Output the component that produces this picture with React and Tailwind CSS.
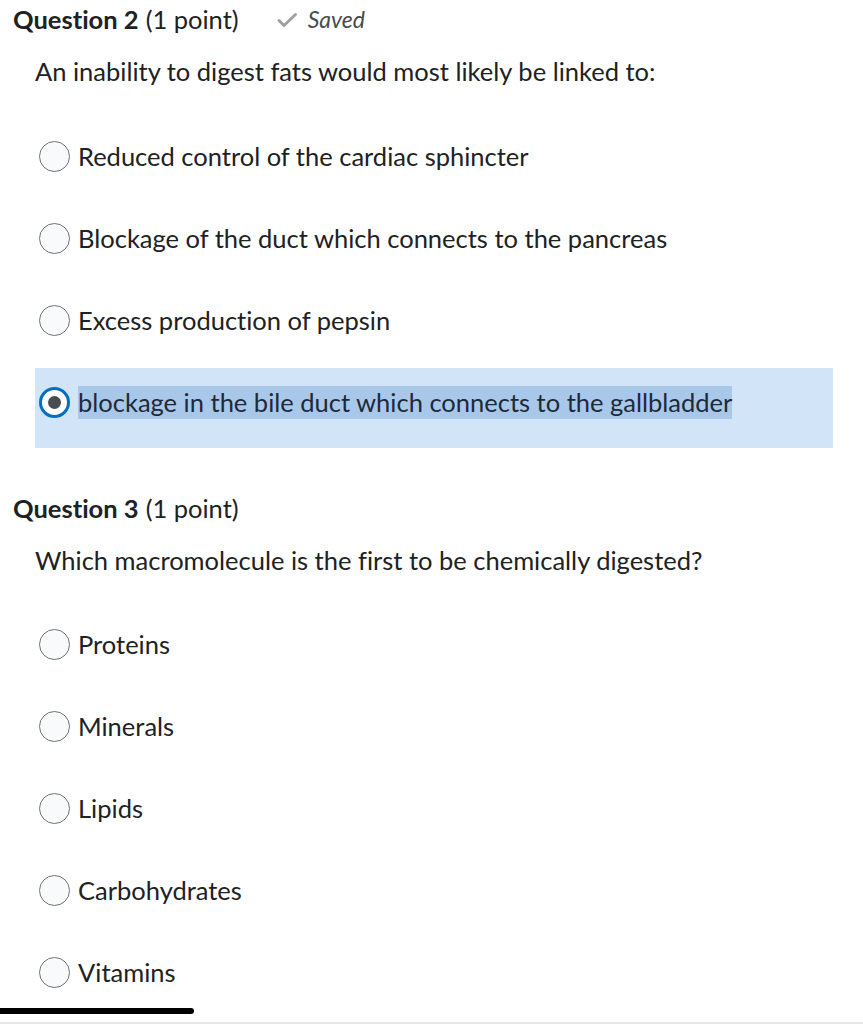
import React from "react";

const Q2 = [
  "Reduced control of the cardiac sphincter",
  "Blockage of the duct which connects to the pancreas",
  "Excess production of pepsin",
];
const Q3 = ["Proteins", "Minerals", "Lipids", "Carbohydrates", "Vitamins"];

function Radio({ checked }) {
  if (checked) {
    return (
      <span className="flex h-[31px] w-[31px] shrink-0 items-center justify-center rounded-full border-[3px] border-[#006fbf] bg-white">
        <span className="h-[13px] w-[13px] rounded-full bg-[#494c4e]" />
      </span>
    );
  }
  return (
    <span className="h-[31px] w-[31px] shrink-0 rounded-full border border-[#6e7376] bg-[#f9fafb]" />
  );
}

function Option({ label, checked }) {
  return (
    <div className={`flex h-[80px] items-start gap-[8px] pl-[4px] pt-[19px] ${checked ? "bg-[#d1e4f8]" : ""}`}>
      <Radio checked={checked} />
      <span className={`-mt-[1px] text-[25.5px] leading-[33px] ${checked ? "bg-[#a9c8e9] text-[#1c2a3a]" : "text-[#202122]"}`}>
        {label}
      </span>
    </div>
  );
}

export default function App() {
  return (
    <div className="relative h-[1024px] w-[863px] overflow-hidden bg-white font-['Lato',sans-serif] text-[#202122] [font-variant-ligatures:none] [font-feature-settings:'liga'_0,'clig'_0,'dlig'_0,'calt'_0]">
      <div className="pl-[13px] pt-[2px]">
        <div className="flex items-center text-[25.5px] leading-[34px]">
          <span className="font-bold">Question 2</span>
          <span className="ml-[7px]">(1 point)</span>
          <svg className="ml-[37px] mt-[2px]" width="22" height="16" viewBox="0 0 22 16" fill="none">
            <path d="M3 8.5l5 5L19.5 2.5" stroke="#9ea1a3" strokeWidth="3" strokeLinecap="round" strokeLinejoin="round" />
          </svg>
          <span className="ml-[10px] text-[23px] italic text-[#494c4e]">Saved</span>
        </div>
        <p className="ml-[22px] mt-[18px] text-[25.5px] leading-[34px]">An inability to digest fats would most likely be linked to:</p>
      </div>
      <div className="ml-[35px] mr-[30px] mt-[34px] flex flex-col gap-[2px]">
        {Q2.map((o) => (
          <Option key={o} label={o} />
        ))}
        <Option label="blockage in the bile duct which connects to the gallbladder" checked />
      </div>
      <div className="pl-[13px] pt-[43px]">
        <div className="text-[25.5px] leading-[34px]">
          <span className="font-bold">Question 3</span>
          <span className="ml-[7px]">(1 point)</span>
        </div>
        <p className="ml-[22px] mt-[18px] text-[25.5px] leading-[34px]">Which macromolecule is the first to be chemically digested?</p>
      </div>
      <div className="ml-[35px] mt-[33px] flex flex-col gap-[2px]">
        {Q3.map((o) => (
          <Option key={o} label={o} />
        ))}
      </div>
      <div className="absolute bottom-[10px] left-0 h-[6px] w-[194px] rounded-r-full bg-black" />
      <div className="absolute bottom-0 left-0 h-[2px] w-full bg-[#e3e5e7]" />
    </div>
  );
}
